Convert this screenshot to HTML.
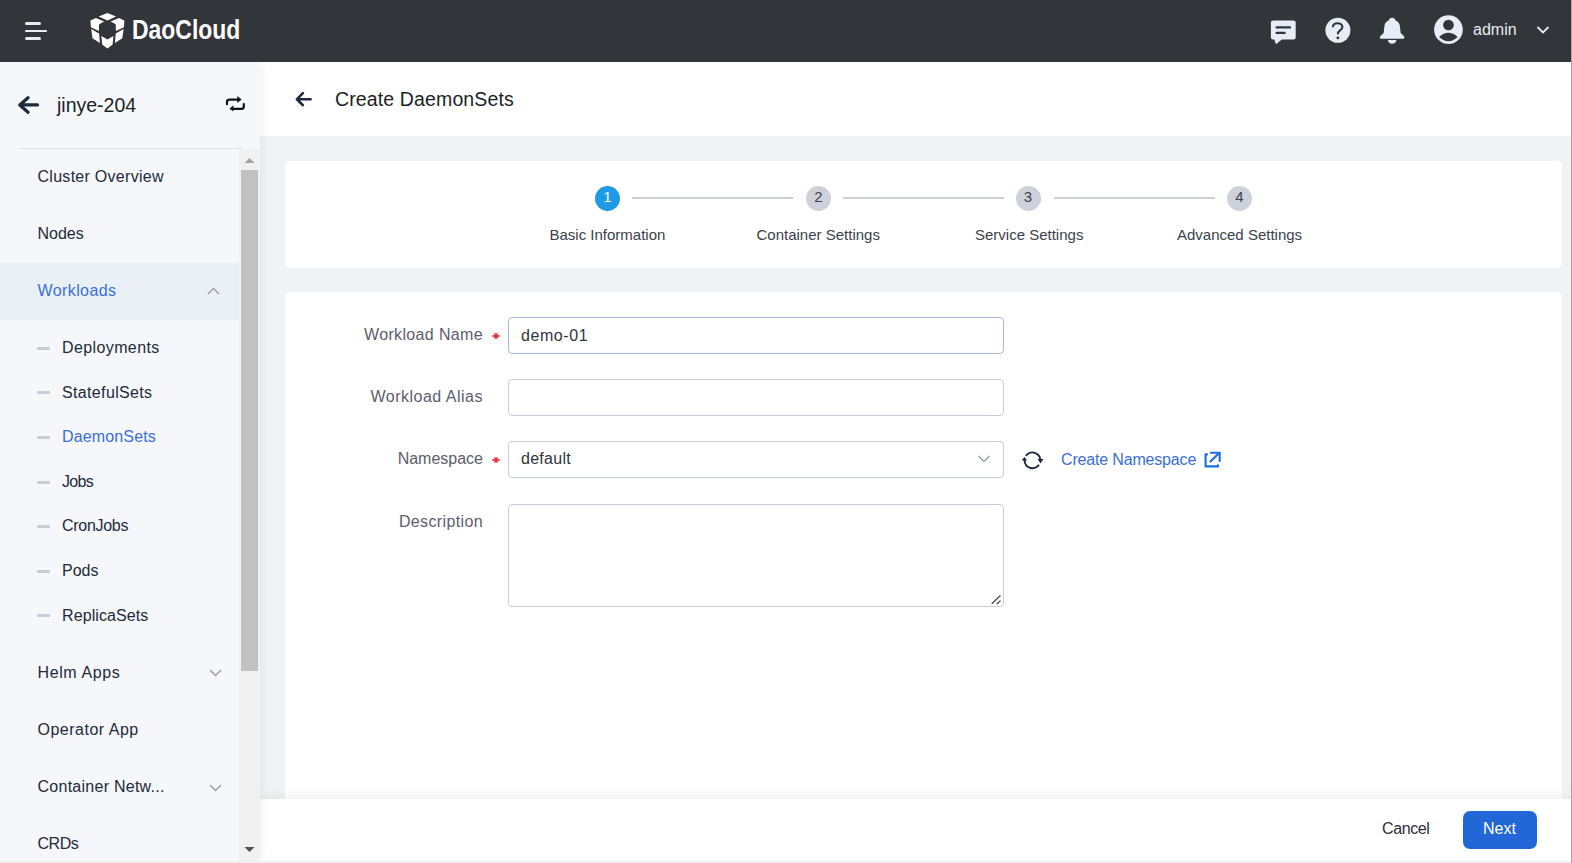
<!DOCTYPE html>
<html>
<head>
<meta charset="utf-8">
<style>
*{box-sizing:border-box;margin:0;padding:0}
html,body{width:1572px;height:863px;overflow:hidden;background:#f0f2f5;font-family:"Liberation Sans",sans-serif}
.abs{position:absolute}
#hdr{position:absolute;left:0;top:0;width:1572px;height:62px;background:#32353a;z-index:3}
#side{position:absolute;left:0;top:62px;width:260px;height:801px;background:#f6f7fb;z-index:2;box-shadow:3px 0 8px -2px rgba(0,0,0,.07)}
#main{position:absolute;left:260px;top:62px;width:1312px;height:801px;background:#f0f2f5}
.t{position:absolute;white-space:nowrap;line-height:1}
.nav{font-size:16px;color:#222b38}
.sub{font-size:16px;color:#222b38}
.dash{position:absolute;left:37px;width:13px;height:3px;background:#c8ccd6;border-radius:1px}
.lbl{font-size:16px;color:#5b606b;text-align:right}
.inp{position:absolute;left:248px;width:496px;border:1px solid #c6ccd8;border-radius:4px;background:#fff}
.step{position:absolute;width:25px;height:25px;border-radius:50%;background:#cdd1d9;color:#3d4250;font-size:15px;text-align:center;line-height:22px}
.sline{position:absolute;height:2px;background:#cbcfd8;top:196px}
.slbl{font-size:15px;color:#3b3f4a}
</style>
</head>
<body>
<div id="hdr">
  <!-- hamburger -->
  <div class="abs" style="left:25px;top:22px;width:16px;height:3px;border-radius:2px;background:#e8ecf4"></div>
  <div class="abs" style="left:25px;top:29.5px;width:22px;height:2.5px;border-radius:1px;background:#e8ecf4"></div>
  <div class="abs" style="left:25px;top:37px;width:16px;height:3px;border-radius:2px;background:#e8ecf4"></div>
  <!-- logo cube -->
  <svg class="abs" style="left:85px;top:8px" width="45" height="45" viewBox="0 0 45 45">
    <g fill="#fff">
      <path d="M22.4 4.9 L31.1 8.4 L22.4 12.6 L13.7 8.4 Z"/>
      <path d="M5.4 12.4 L10.9 9.9 L19.1 13.4 L14.1 16.2 L13.9 23 L5.9 19.2 Z"/>
      <path d="M39.4 12.4 L33.9 9.9 L25.7 13.4 L30.7 16.2 L30.9 23 L38.9 19.2 Z"/>
      <path d="M6.2 21.1 L14.1 25.4 L14.9 35 L7.5 30.3 Z"/>
      <path d="M38.6 21.1 L30.7 25.4 L29.9 35 L37.3 30.3 Z"/>
      <path d="M16.4 27.9 L22.4 31.5 L28.4 27.9 L27.6 36.5 L22.4 40.4 L17.2 36.5 Z"/>
    </g>
  </svg>
  <div class="t" style="left:132px;top:17px;font-size:27px;font-weight:bold;color:#fff;transform:scaleX(.85);transform-origin:0 0">DaoCloud</div>
  <!-- chat -->
  <svg class="abs" style="left:1270px;top:19px" width="27" height="26" viewBox="0 0 27 26">
    <path d="M2.9 1.5 H23.7 A2 2 0 0 1 25.7 3.5 V18.6 A2 2 0 0 1 23.7 20.6 H11.8 L6.6 24.8 Q5.9 25.2 5.7 24.4 L4.3 20.6 H2.9 A2 2 0 0 1 0.9 18.6 V3.5 A2 2 0 0 1 2.9 1.5 Z" fill="#e8ecf4"/>
    <path d="M6.7 8.4 H19.9 M6.7 13.9 H14.5" stroke="#32353a" stroke-width="2.4" stroke-linecap="round"/>
  </svg>
  <!-- help -->
  <svg class="abs" style="left:1324px;top:17px" width="28" height="28" viewBox="0 0 28 28">
    <circle cx="13.9" cy="13.3" r="12.5" fill="#e8ecf4"/>
    <path d="M8.9 9.4 C9.3 7.4 11.2 6.3 13.6 6.3 C16.3 6.3 18.4 7.8 18.4 10 C18.4 12.1 16.6 13.1 15.3 14.1 C14.3 14.9 13.9 15.5 13.9 16.4" fill="none" stroke="#32353a" stroke-width="2.1" stroke-linecap="round"/>
    <circle cx="13.9" cy="20.9" r="1.45" fill="#32353a"/>
  </svg>
  <!-- bell -->
  <svg class="abs" style="left:1379px;top:17px" width="27" height="28" viewBox="0 0 27 28">
    <path d="M13.15 0.7 C15 0.7 16.2 2 16.6 3.5 C19.5 4.5 20.8 7 21 10 L21.6 15.8 C22.4 17 24 18.3 25.2 19.6 C25.6 20.5 25.3 21.8 24.5 21.8 H1.8 C1 21.8 0.7 20.5 1.1 19.6 C2.3 18.3 3.9 17 4.7 15.8 L5.3 10 C5.5 7 6.8 4.5 9.7 3.5 C10.1 2 11.3 0.7 13.15 0.7 Z" fill="#e8ecf4"/>
    <path d="M8.9 22.9 H17.4 C17.4 25 15.5 26.7 13.15 26.7 C10.8 26.7 8.9 25 8.9 22.9 Z" fill="#e8ecf4"/>
  </svg>
  <!-- avatar -->
  <svg class="abs" style="left:1433px;top:14px" width="31" height="31" viewBox="0 0 31 31">
    <circle cx="15.45" cy="15.65" r="14.3" fill="#e8ecf4"/>
    <circle cx="15.45" cy="11" r="5.35" fill="#32353a"/>
    <path d="M6.1 23 Q15.4 14.6 24.7 23 Q15.4 31.4 6.1 23 Z" fill="#32353a"/>
  </svg>
  <div class="t" style="left:1473px;top:22px;font-size:16px;color:#e8ecf4">admin</div>
  <svg class="abs" style="left:1536px;top:25px" width="14" height="10" viewBox="0 0 14 10">
    <path d="M1.5 2 L7 7.5 L12.5 2" fill="none" stroke="#e8ecf4" stroke-width="1.8"/>
  </svg>
  
</div>

<div id="side">
  <!-- back arrow -->
  <svg class="abs" style="left:17px;top:32px" width="24" height="22" viewBox="0 0 24 22">
    <path d="M11 3.8 L2.8 10.9 L11 18.2 M3.2 10.9 H20.5" fill="none" stroke="#1b2a3c" stroke-width="3.3" stroke-linecap="round" stroke-linejoin="round"/>
  </svg>
  <div class="t" style="left:57px;top:34px;font-size:19.5px;color:#1b1f26">jinye-204</div>
  <!-- switch icon -->
  <svg class="abs" style="left:225px;top:33px" width="21" height="18" viewBox="0 0 21 18">
    <path d="M2 9.2 V6.8 Q2 4.6 4.6 4.6 H12.8" fill="none" stroke="#0f1115" stroke-width="2.2" stroke-linecap="round"/>
    <path d="M12.3 1.1 L16.6 4.6 L12.3 8 Z" fill="#0f1115"/>
    <path d="M18.8 9.2 V11.5 Q18.8 13.9 16.2 13.9 H8" fill="none" stroke="#0f1115" stroke-width="2.2" stroke-linecap="round"/>
    <path d="M8.4 10.3 L4.4 13.8 L8.4 16.6 Z" fill="#0f1115"/>
  </svg>
  <div class="abs" style="left:19px;top:86px;width:223px;height:1px;background:#dde0e6"></div>

  <div class="t nav" style="left:37.5px;top:107px;letter-spacing:0.28px">Cluster Overview</div>
  <div class="t nav" style="left:37.5px;top:164px">Nodes</div>
  <div class="abs" style="left:0;top:201px;width:239px;height:57px;background:#ebeff6"></div>
  <div class="t nav" style="left:37.5px;top:221px;color:#3a6fd8;letter-spacing:0.4px">Workloads</div>
  <svg class="abs" style="left:206px;top:224px" width="15" height="10" viewBox="0 0 15 10">
    <path d="M2 8 L7.5 2.5 L13 8" fill="none" stroke="#9aa0ab" stroke-width="1.5"/>
  </svg>

  <div class="dash" style="top:284.5px"></div><div class="t sub" style="left:62px;top:278px;letter-spacing:0.39px">Deployments</div>
  <div class="dash" style="top:329px"></div><div class="t sub" style="left:62px;top:323px;letter-spacing:0.35px">StatefulSets</div>
  <div class="dash" style="top:374px"></div><div class="t sub" style="left:62px;top:367px;color:#3a6fd8;letter-spacing:0.14px">DaemonSets</div>
  <div class="dash" style="top:418.5px"></div><div class="t sub" style="left:62px;top:412px;letter-spacing:-0.7px">Jobs</div>
  <div class="dash" style="top:463px"></div><div class="t sub" style="left:62px;top:456px;letter-spacing:-0.3px">CronJobs</div>
  <div class="dash" style="top:507.5px"></div><div class="t sub" style="left:62px;top:501px">Pods</div>
  <div class="dash" style="top:552px"></div><div class="t sub" style="left:62px;top:546px;letter-spacing:0.1px">ReplicaSets</div>

  <div class="t nav" style="left:37.5px;top:603px;letter-spacing:0.6px">Helm Apps</div>
  <svg class="abs" style="left:208px;top:606px" width="15" height="10" viewBox="0 0 15 10">
    <path d="M2 2 L7.5 7.5 L13 2" fill="none" stroke="#9aa0ab" stroke-width="1.5"/>
  </svg>
  <div class="t nav" style="left:37.5px;top:660px;letter-spacing:0.5px">Operator App</div>
  <div class="t nav" style="left:37.5px;top:717px;letter-spacing:0.26px">Container Netw...</div>
  <svg class="abs" style="left:208px;top:720.5px" width="15" height="10" viewBox="0 0 15 10">
    <path d="M2 2 L7.5 7.5 L13 2" fill="none" stroke="#9aa0ab" stroke-width="1.5"/>
  </svg>
  <div class="t nav" style="left:37.5px;top:774px;letter-spacing:-0.45px">CRDs</div>

  <!-- scrollbar -->
  <div class="abs" style="left:239px;top:87px;width:21px;height:714px;background:#f1f1f1"></div>
  <div class="abs" style="left:241px;top:108px;width:17px;height:501px;background:#c1c1c1"></div>
  <svg class="abs" style="left:244px;top:95px" width="11" height="7" viewBox="0 0 11 7"><path d="M0.5 6 L5.5 1 L10.5 6 Z" fill="#a3a3a3"/></svg>
  <svg class="abs" style="left:244px;top:784px" width="11" height="7" viewBox="0 0 11 7"><path d="M0.5 1 L5.5 6 L10.5 1 Z" fill="#505050"/></svg>
</div>

<div id="main">
  <div class="abs" style="left:0;top:0;width:1312px;height:74px;background:#fff"></div>
  
  <svg class="abs" style="left:33px;top:28px" width="20" height="19" viewBox="0 0 20 19">
    <path d="M9.9 3.2 L3.9 9.3 L9.9 15.2 M4.2 9.3 H17.6" fill="none" stroke="#1b2a3c" stroke-width="2.6" stroke-linecap="round" stroke-linejoin="round"/>
  </svg>
  <div class="t" style="left:75px;top:28px;font-size:19.5px;color:#1b1f26;letter-spacing:0.13px">Create DaemonSets</div>

  <!-- steps card -->
  <div class="abs" style="left:25px;top:99px;width:1277px;height:107px;background:#fff;border-radius:5px"></div>
  <!-- form card -->
  <div class="abs" style="left:25px;top:230px;width:1277px;height:620px;background:#fff;border-radius:5px"></div>


  <!-- steps -->
  <div class="sline" style="left:372px;top:135px;width:161px"></div>
  <div class="sline" style="left:583px;top:135px;width:161px"></div>
  <div class="sline" style="left:794px;top:135px;width:161px"></div>
  <div class="step" style="left:335px;top:123.8px;background:#1f9ae7;color:#fff">1</div>
  <div class="step" style="left:546px;top:123.8px">2</div>
  <div class="step" style="left:755.5px;top:123.8px">3</div>
  <div class="step" style="left:967px;top:123.8px">4</div>
  <div class="t slbl" style="left:289.5px;top:165px">Basic Information</div>
  <div class="t slbl" style="left:496.5px;top:165px">Container Settings</div>
  <div class="t slbl" style="left:715px;top:165px">Service Settings</div>
  <div class="t slbl" style="left:917px;top:165px">Advanced Settings</div>

  <!-- form -->
  <div class="t lbl" style="right:1089px;top:265px;letter-spacing:0.35px">Workload Name</div>
  <svg class="abs" style="left:229.5px;top:267.5px" width="12" height="12" viewBox="0 0 12 12"><path d="M2.6 6 H9.4 M4.9 3.7 L7.1 8.3 M7.1 3.7 L4.9 8.3" stroke="#e5242c" stroke-width="1.4" stroke-linecap="round"/></svg>
  <div class="inp" style="top:255px;height:37px;border-color:#a6bad8"></div>
  <div class="t" style="left:261px;top:266px;font-size:16px;color:#2f343d;letter-spacing:0.57px">demo-01</div>

  <div class="t lbl" style="right:1089px;top:327px;letter-spacing:0.5px">Workload Alias</div>
  <div class="inp" style="top:317px;height:37px"></div>

  <div class="t lbl" style="right:1089px;top:389px">Namespace</div>
  <svg class="abs" style="left:229.5px;top:391.7px" width="12" height="12" viewBox="0 0 12 12"><path d="M2.6 6 H9.4 M4.9 3.7 L7.1 8.3 M7.1 3.7 L4.9 8.3" stroke="#e5242c" stroke-width="1.4" stroke-linecap="round"/></svg>
  <div class="inp" style="top:379px;height:37px"></div>
  <div class="t" style="left:261px;top:389px;font-size:16px;color:#2f343d;letter-spacing:0.27px">default</div>
  <svg class="abs" style="left:717px;top:392px" width="14" height="10" viewBox="0 0 14 10">
    <path d="M1.5 2 L7 7.5 L12.5 2" fill="none" stroke="#9aa0ab" stroke-width="1.4"/>
  </svg>
  <svg class="abs" style="left:760px;top:387px" width="26" height="22" viewBox="0 0 26 22">
    <path d="M6.45 6.22 A7.9 7.9 0 0 1 20.3 10.6" fill="none" stroke="#17263a" stroke-width="1.9" stroke-linecap="round"/>
    <path d="M18.55 16.38 A7.9 7.9 0 0 1 4.6 11.8" fill="none" stroke="#17263a" stroke-width="1.9" stroke-linecap="round"/>
    <path d="M17.8 10.1 L23.4 10.1 L20.4 14.6 Z" fill="#17263a"/>
    <path d="M1.6 11.6 L7.2 11.6 L4.5 8.1 Z" fill="#17263a"/>
  </svg>
  <div class="t" style="left:801px;top:390px;font-size:16px;color:#3a6fd8;letter-spacing:-0.17px">Create Namespace</div>
  <svg class="abs" style="left:943px;top:389px" width="20" height="18" viewBox="0 0 20 18">
    <path d="M4.1 3.4 H2.6 V15.4 H15 V14.3" fill="none" stroke="#1f6be6" stroke-width="2.1" stroke-linecap="round" stroke-linejoin="round"/>
    <path d="M7.4 10.6 L16.2 2 M7.8 1.7 H16.7 V10.1" fill="none" stroke="#1f6be6" stroke-width="2.1" stroke-linecap="round" stroke-linejoin="round"/>
  </svg>

  <div class="t lbl" style="right:1089px;top:452px;letter-spacing:0.37px">Description</div>
  <div class="inp" style="top:442px;height:103px"></div>
  <svg class="abs" style="left:731px;top:532px" width="12" height="12" viewBox="0 0 12 12">
    <path d="M1.1 9.5 L9.1 1.7 M6.1 9.8 L9.1 7" stroke="#4a4a4a" stroke-width="1.3" stroke-linecap="round"/>
  </svg>

  <!-- footer -->
  <div class="abs" style="left:0;top:737px;width:1312px;height:64px;background:#fff;box-shadow:0 -3px 12px rgba(0,0,0,.06)"></div>
  <div class="t" style="left:1122px;top:759px;font-size:16px;color:#2a2f38;letter-spacing:-0.4px">Cancel</div>
  <div class="abs" style="left:1203px;top:749px;width:74px;height:38px;background:#2167d8;border-radius:7px"></div>
  <div class="t" style="left:1223px;top:759px;font-size:16px;color:#fff">Next</div>
  </div>
<div class="abs" style="left:0;top:861px;width:1572px;height:2px;background:#efefef;z-index:5"></div>
<div class="abs" style="left:1571px;top:0;width:1px;height:863px;background:#a6a6a6;z-index:6"></div>
</body>
</html>
